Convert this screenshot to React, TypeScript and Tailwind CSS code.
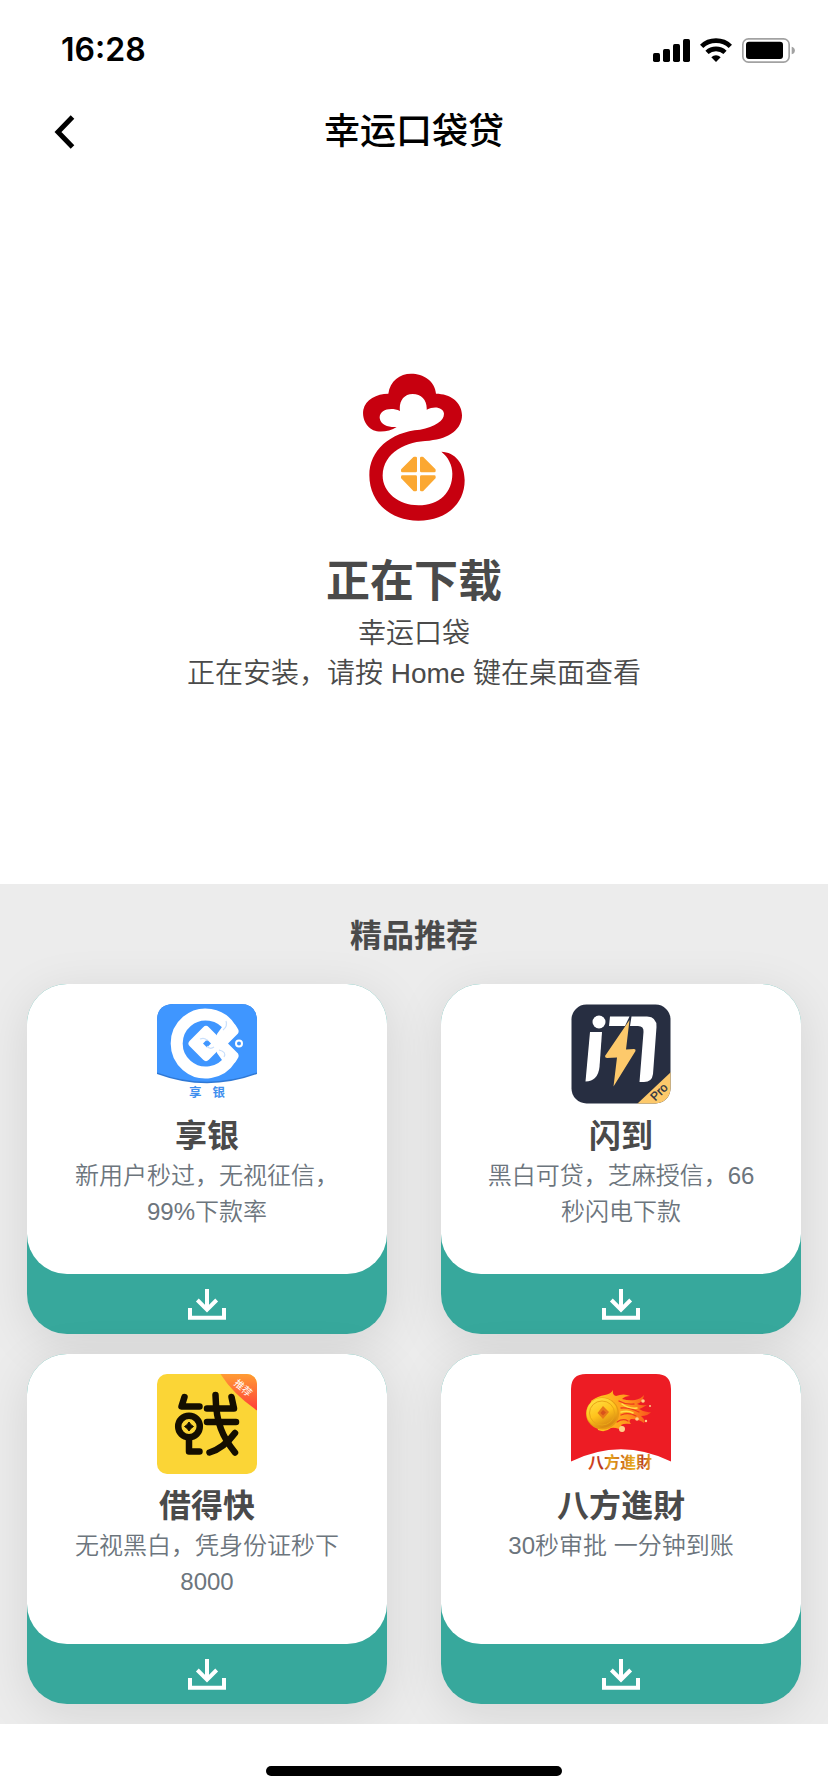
import type { ReactNode } from "react";

const sans = "font-['Liberation_Sans','Noto_Sans_CJK_SC',sans-serif]";

function StatusBar() {
  return (
    <div className="flex h-[88px] items-center justify-between pt-3 pr-[33px] pl-[61px]">
      <time className="font-['Inter',sans-serif] text-[32px] leading-10 font-semibold">16:28</time>
      <div className="flex items-center gap-[10px]">
        <svg className="h-[23px] w-[37px]" viewBox="0 0 111 69" aria-hidden="true">
          <rect x="0" y="42" width="21" height="27" rx="5" />
          <rect x="30" y="30" width="21" height="39" rx="5" />
          <rect x="60" y="15" width="21" height="54" rx="5" />
          <rect x="90" y="0" width="21" height="69" rx="5" />
        </svg>
        <svg className="h-[24px] w-[32px]" viewBox="0 0 96 72" aria-hidden="true">
          <g fill="none" stroke="#000" strokeWidth="14">
            <path d="M5 25 C28 2 68 2 91 25" />
            <path d="M21 43 C36 29 60 29 75 43" />
          </g>
          <path d="M34 58 C42 50 54 50 62 58 L48 72Z" />
        </svg>
        <svg className="h-[25px] w-[53px]" viewBox="0 0 159 75" aria-hidden="true">
          <rect x="2.5" y="2.5" width="139" height="70" rx="17" fill="none" stroke="#a2a2a2" strokeWidth="5" />
          <rect x="12" y="11" width="111" height="52" rx="9" />
          <path d="M149 26 C162 28 162 47 149 49Z" fill="#a2a2a2" />
        </svg>
      </div>
    </div>
  );
}

function PocketLogo() {
  return (
    <svg className="h-[160px] w-[150px]" viewBox="-3 47 450 480" role="img" aria-label="幸运口袋">
      <path
        fill="#c7000f"
        d="M170 230 C150 243 120 248 100 240 C75 228 66 200 70 178 C76 148 110 130 145 130 C150 92 180 70 213 70 C250 70 285 92 288 130 C330 130 366 155 366 195 C366 235 330 265 268 271 C200 272 130 305 128 375 C127 425 175 465 235 465 C300 465 337 425 337 370 C337 345 325 320 304 304 C345 305 374 340 374 390 C374 460 320 511 235 511 C150 511 88 455 88 375 C88 300 150 245 240 238 C285 228 312 212 312 190 C310 172 285 165 260 178 C262 150 245 131 218 131 C190 131 176 155 180 182 C150 168 118 180 119 203 C122 225 148 232 170 230Z"
      />
      <g fill="#fba832" stroke="#fba832" strokeWidth="8" strokeLinejoin="round">
        <path d="M227 323 V362 H187 V359 L223 323Z" />
        <path d="M244 323 V362 H283 V359 L247 323Z" />
        <path d="M227 419 V379 H187 V382 L223 419Z" />
        <path d="M244 419 V379 H283 V382 L247 419Z" />
      </g>
      <circle cx="235.500" cy="370.500" r="6" fill="#fff" />
    </svg>
  );
}

function XiangyinIcon() {
  return (
    <svg className="size-[100px]" viewBox="0 0 100 100" aria-hidden="true">
      <path d="M0 17 Q0 0 17 0 H83 Q100 0 100 17 V70 Q50 88.500 0 70Z" fill="#2f78d4" />
      <path d="M0 17 Q0 0 17 0 H83 Q100 0 100 17 V68.500 Q50 87 0 68.500Z" fill="#3f96ff" />
      <path d="M73.500 24.500 A29 29 0 1 0 73.500 54.500" fill="none" stroke="#fff" strokeWidth="12" />
      <path d="M65 23 L72 19 L78 20.500 Q80 23 81.500 26 Q82 28 81 29.500 L71 39.500 L81 49.500 Q82 51 81.500 53 Q80 56 78 58.500 L72 60 L65 56 L60 49 L58 39.500 L60 30Z" fill="#fff" />
      <rect x="35.500" y="26" width="27" height="27" rx="4" transform="rotate(45 49 39.500)" fill="#fff" />
      <path d="M50 35.500 L54 39.500 L50 43.500 L46 39.500Z" fill="#3f96ff" />
      <path d="M43 35 Q48 33 50.500 37 M50 42 Q53 46 57 43 M69 17 Q71 22 66 26 M62 46 Q70 48 67 53" fill="none" stroke="#c9dffb" strokeWidth="1.200" />
      <circle cx="82" cy="39.500" r="3" fill="none" stroke="#fff" strokeWidth="2" />
      <text x="32" y="93" fontSize="12.500" fontWeight="700" fill="#3f8fee">享</text>
      <text x="55.500" y="93" fontSize="12.500" fontWeight="700" fill="#3f8fee">银</text>
    </svg>
  );
}

function ShandaoIcon() {
  return (
    <svg className="size-[100px]" viewBox="0 0 100 100" aria-hidden="true">
      <defs>
        <clipPath id="sdClip">
          <rect x="0.500" y="0.500" width="99" height="99" rx="15" />
        </clipPath>
      </defs>
      <g clipPath="url(#sdClip)">
        <rect width="100" height="100" fill="#272e41" />
        <path d="M66 100 L100 68 V100Z" fill="#fdc96b" />
      </g>
      <g fill="#fff">
        <circle cx="28" cy="18" r="6.500" />
        <path d="M19 28 H31 L28.500 63 Q27 77 14.500 77.500Z" />
        <path d="M39 12.500 H58.500 L54 22 H38Z" />
        <path d="M60.500 12.500 H76 Q86 13 85.500 23 L82 70 Q81 78 73 78 H68.500 L72.500 28 Q73 22 67 22 H59Z" />
      </g>
      <path d="M58.500 16 L34 52 Q34 54 36 54 L46 53.500 L42.500 82.500 L64.500 47 Q65 45 63 45 L55 45.500Z" fill="#fdc96b" />
      <text x="88" y="88" fontSize="12" textAnchor="middle" dominantBaseline="central" transform="rotate(-45 88 88)" fill="#272e41" stroke="#272e41" strokeWidth="0.300">
        Pro
      </text>
    </svg>
  );
}

function JiedekuaiIcon() {
  return (
    <svg className="size-[100px]" viewBox="0 0 100 100" aria-hidden="true">
      <defs>
        <clipPath id="jdClip">
          <rect width="100" height="100" rx="10" />
        </clipPath>
        <linearGradient id="jdRibbon" x1="0" y1="0" x2="0" y2="1">
          <stop offset="0" stopColor="#ff9c34" />
          <stop offset="1" stopColor="#ff3d38" />
        </linearGradient>
      </defs>
      <g clipPath="url(#jdClip)">
        <rect width="100" height="100" fill="#fbd536" />
        <path d="M63.500 0 Q76 20 100 36.500 V0Z" fill="url(#jdRibbon)" />
      </g>
      <g fill="none" stroke="#140e00" strokeWidth="6.500" strokeLinecap="round" strokeLinejoin="round">
        <path d="M27.500 23 L24.500 32.500 H42.500" />
        <circle cx="32" cy="52.500" r="10.800" />
        <path d="M32 65 V77.500 H42.500" />
        <path d="M50 34.500 H77 L74.500 23" />
        <path d="M50 48 H79" />
        <path d="M58.500 21 Q59 43 64 55 Q68 66 78 78.500" />
        <path d="M78 59 Q67 74 52.500 78.500" />
      </g>
      <path d="M32 48 Q33.500 51 36.500 52.500 Q33.500 54 32 57 Q30.500 54 27.500 52.500 Q30.500 51 32 48Z" fill="#140e00" stroke="#140e00" />
      <text x="86" y="14" fontSize="10" textAnchor="middle" dominantBaseline="central" transform="rotate(42 86 14)" fill="#fff">
        推荐
      </text>
    </svg>
  );
}

function BafangIcon() {
  return (
    <svg className="size-[100px]" viewBox="0 0 100 100" aria-hidden="true">
      <defs>
        <linearGradient id="bfText" x1="0" y1="0" x2="1" y2="0">
          <stop offset="0" stopColor="#d9481c" />
          <stop offset="0.220" stopColor="#b5351b" />
          <stop offset="0.350" stopColor="#e3a51c" />
          <stop offset="0.520" stopColor="#cf6b1a" />
          <stop offset="0.720" stopColor="#e8b41f" />
          <stop offset="0.860" stopColor="#b93c1a" />
          <stop offset="1" stopColor="#eeb820" />
        </linearGradient>
        <linearGradient id="bfFire" x1="0" y1="0" x2="1" y2="0">
          <stop offset="0" stopColor="#ffd21f" />
          <stop offset="0.600" stopColor="#ff9a1c" />
          <stop offset="1" stopColor="#f8501c" />
        </linearGradient>
        <linearGradient id="bfCoin" x1="0" y1="0" x2="0.500" y2="1">
          <stop offset="0" stopColor="#ffe64a" />
          <stop offset="0.600" stopColor="#ffc31c" />
          <stop offset="1" stopColor="#d98a12" />
        </linearGradient>
      </defs>
      <path d="M0 15 Q0 0 15 0 H85 Q100 0 100 15 V87.500 Q50 63 0 87.500Z" fill="#ed1c24" />
      <path
        fill="url(#bfFire)"
        d="M20 27 Q27 22 34 21 Q40 20 42 16 Q41 21 45 22 Q53 19 59 22 Q54 22 51 25 Q58 27 64 26 Q70 25 73 21 Q72 28 66 30 Q70 32 76 31 Q71 34 68 35 Q74 39 80 38 Q77 42 70 42 Q75 46 73 49 Q68 45 60 45 Q57 47 60 50 Q53 49 50 51 Q54 56 52 58 Q47 53 40 54 Q34 59 27 56Z"
      />
      <g fill="none" stroke="#ee3a1f" strokeWidth="1.300" strokeLinecap="round">
        <path d="M48 27 Q55 31 63 30" />
        <path d="M50 34 Q58 33 68 38" />
        <path d="M50 41 Q58 38 65 42" />
        <path d="M46 48 Q52 44 57 47" />
      </g>
      <path d="M51 30 Q58 35 66 34 M50 38 Q57 36 62 39" fill="none" stroke="#ffe24a" strokeWidth="1.500" strokeLinecap="round" />
      <ellipse cx="31.500" cy="39.500" rx="16.500" ry="16" fill="#e79a14" />
      <ellipse cx="31" cy="39" rx="15.500" ry="15" fill="url(#bfCoin)" />
      <ellipse cx="31" cy="39" rx="12.500" ry="12" fill="none" stroke="#e9a517" strokeWidth="1" />
      <path d="M32 32 L38 38 L32 45 L26.500 39Z" fill="#e8781a" />
      <path d="M32 36 L35 38.500 L32 41.500 L29.500 39Z" fill="#d8531c" />
      <g fill="#ffd08a">
        <circle cx="51" cy="55" r="3" />
        <circle cx="66" cy="45" r="1.800" />
        <circle cx="72" cy="27" r="1.800" />
        <circle cx="75" cy="47" r="1.200" />
        <circle cx="79" cy="32" r="1" />
      </g>
      <text x="49" y="94" fontSize="16" fontWeight="700" textAnchor="middle" fill="url(#bfText)">
        八方進財
      </text>
    </svg>
  );
}

function DownloadGlyph() {
  return (
    <svg className="h-[31px] w-[38px]" viewBox="0 0 114 93" fill="none" stroke="#fff" strokeWidth="12" aria-hidden="true">
      <path d="M57 0 V62" />
      <path d="M28 33 L57 62 L86 33" />
      <path d="M6 57 V86 H108 V57" />
    </svg>
  );
}

type AppItem = { name: string; note: string; icon: ReactNode };

const apps: AppItem[] = [
  { name: "享银", note: "新用户秒过，无视征信，99%下款率", icon: <XiangyinIcon /> },
  { name: "闪到", note: "黑白可贷，芝麻授信，66秒闪电下款", icon: <ShandaoIcon /> },
  { name: "借得快", note: "无视黑白，凭身份证秒下8000", icon: <JiedekuaiIcon /> },
  { name: "八方進財", note: "30秒审批 一分钟到账", icon: <BafangIcon /> },
];

function AppCard({ name, note, icon }: AppItem) {
  return (
    <li className="flex flex-col rounded-[40px] bg-[#37a89c] shadow-[0_10px_50px_rgba(0,0,0,0.1)]">
      <div className="flex min-h-[290px] grow flex-col items-center rounded-[40px] bg-white px-10 pt-5 text-center">
        {icon}
        <h3 className="mt-[10px] text-[32px] leading-[44px] font-bold text-[#4a4a4a]">{name}</h3>
        <p className="text-[24px] leading-9 font-[350] text-[#6c757d]">{note}</p>
      </div>
      <button type="button" aria-label={`下载${name}`} className="flex h-[60px] items-center justify-center rounded-b-[40px]">
        <DownloadGlyph />
      </button>
    </li>
  );
}

export default function App() {
  return (
    <div lang="zh-CN" className={`flex min-h-screen flex-col bg-white text-black ${sans}`}>
      <StatusBar />
      <header className="grid h-[88px] grid-cols-[1fr_auto_1fr] items-center px-[54px]">
        <button type="button" aria-label="返回" className="justify-self-start">
          <svg className="h-[34px] w-[21px]" viewBox="0 0 21 34" fill="none" stroke="#000" strokeWidth="5" aria-hidden="true">
            <path d="M18.500 2 L4 17 L18.500 32" />
          </svg>
        </button>
        <h1 className="text-[36px] leading-[52px] font-medium">幸运口袋贷</h1>
      </header>
      <main>
        <section className="flex flex-col items-center px-6 pt-[190px] pb-[190px] text-center text-[#4a4a4a]">
          <PocketLogo />
          <h2 className="mt-6 text-[44px] leading-[64px] font-bold">正在下载</h2>
          <p className="text-[28px] leading-10 font-[350]">幸运口袋</p>
          <p className="text-[28px] leading-10 font-[350]">正在安装，请按 Home 键在桌面查看</p>
        </section>
        <section className="overflow-hidden bg-[#ececec] px-[27px] pt-7 pb-5">
          <h2 className="text-center text-[32px] leading-[48px] font-bold text-[#4a4a4a]">精品推荐</h2>
          <ul className="mt-6 grid grid-cols-2 gap-x-[54px] gap-y-5">
            {apps.map((app) => (
              <AppCard key={app.name} {...app} />
            ))}
          </ul>
        </section>
      </main>
      <footer className="mt-auto flex justify-center pt-8 pb-4">
        <div className="h-[10px] w-[296px] rounded-full bg-black" />
      </footer>
    </div>
  );
}
